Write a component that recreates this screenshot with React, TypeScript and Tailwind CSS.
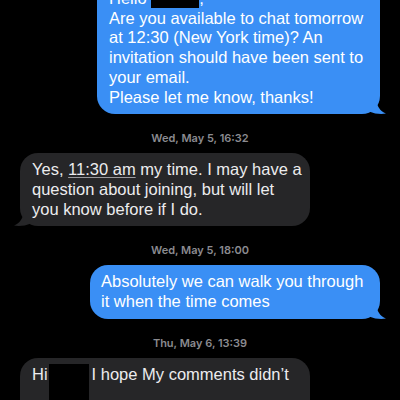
import React from 'react';

const font = { fontFamily: '"Liberation Sans", Arial, sans-serif' };

function Tail({ side, color }: { side: 'left' | 'right'; color: string }) {
  const isRight = side === 'right';
  return (
    <svg
      width="17"
      height="16"
      viewBox="0 0 17 16"
      className={isRight ? 'absolute -right-[6px] bottom-0' : 'absolute -left-[6px] bottom-0 -scale-x-100'}
    >
      <path d="M0 0 H7 C7.5 8 11 13 17 15.6 C12 16.4 6 16 0 13.5 Z" fill={color} />
    </svg>
  );
}

function Stamp({ children }: { children: React.ReactNode }) {
  return (
    <div
      className="mt-[17px] mb-[8px] text-center text-[11px] leading-[14px] font-semibold text-[#8b8b90]"
      style={{ fontFamily: 'Inter, "Noto Sans", sans-serif' }}
    >
      {children}
    </div>
  );
}

export default function App() {
  return (
    <div className="w-[400px] h-[400px] overflow-hidden bg-black text-[16.5px] leading-[19.7px]" style={font}>
      <div className="flex flex-col -mt-[18px]">
        <div className="self-end mr-[20px] relative">
          <div className="bg-[#3a8ff5] text-white rounded-[18px] pl-[12px] pr-[14px] py-[7px] w-[283px]">
            <div className="flex items-start">
              Hello&nbsp;<span className="inline-block w-[48px] h-[27px] -mt-[8px] bg-black" />,
            </div>
            <div className="whitespace-nowrap">Are you available to chat tomorrow</div>
            <div className="whitespace-nowrap">at 12:30 (New York time)? An</div>
            <div className="whitespace-nowrap">invitation should have been sent to</div>
            <div className="whitespace-nowrap">your email.</div>
            <div className="whitespace-nowrap">Please let me know, thanks!</div>
          </div>
          <Tail side="right" color="#3a8ff5" />
        </div>

        <Stamp>Wed, May 5, 16:32</Stamp>

        <div className="self-start ml-[20px] relative">
          <div className="bg-[#262628] text-[#ececee] rounded-[18px] pl-[12px] pr-[14px] py-[7px] w-[290px]">
            <div className="whitespace-nowrap">
              Yes, <span className="underline decoration-[#9a9a9e] underline-offset-2">11:30 am</span> my time. I may have a
            </div>
            <div className="whitespace-nowrap">question about joining, but will let</div>
            <div className="whitespace-nowrap">you know before if I do.</div>
          </div>
          <Tail side="left" color="#262628" />
        </div>

        <Stamp>Wed, May 5, 18:00</Stamp>

        <div className="self-end mr-[20px] relative">
          <div className="bg-[#3a8ff5] text-white rounded-[18px] pl-[11px] pr-[14px] py-[7px] w-[290px]">
            <div className="whitespace-nowrap">Absolutely we can walk you through</div>
            <div className="whitespace-nowrap">it when the time comes</div>
          </div>
          <Tail side="right" color="#3a8ff5" />
        </div>

        <Stamp>Thu, May 6, 13:39</Stamp>

        <div className="self-start ml-[20px] relative">
          <div className="bg-[#262628] text-[#ececee] rounded-[18px] pl-[12px] pr-[14px] py-[7px] w-[290px]">
            <div className="flex items-start whitespace-nowrap">
              Hi<span className="inline-block ml-[1px] mr-[3px] w-[40px] h-[44px] -mt-[1px] bg-black" />I hope My comments didn’t
            </div>
            <div className="whitespace-nowrap">seem dismissive in any way. I</div>
          </div>
        </div>
      </div>
    </div>
  );
}
